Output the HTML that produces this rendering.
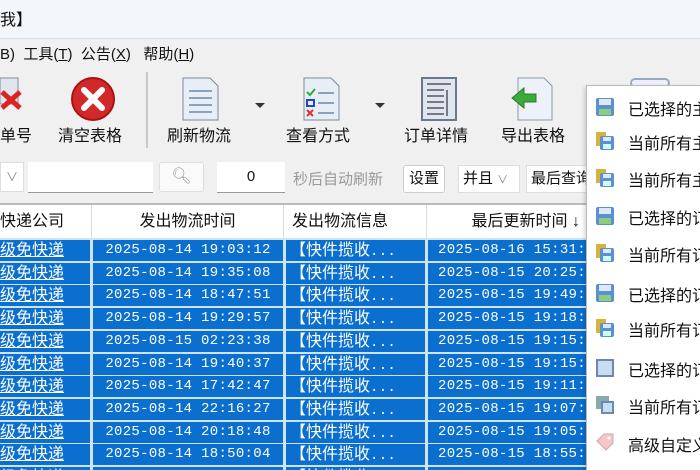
<!DOCTYPE html>
<html style="overflow:hidden;width:700px;height:470px"><head><meta charset="utf-8"><style>
*{margin:0;padding:0;box-sizing:border-box}
body{width:700px;height:470px;overflow:hidden;background:#f0f0f0;font-family:"Liberation Sans","Noto Sans CJK SC",sans-serif;position:relative;color:#111}
.a{position:absolute;white-space:nowrap}
.lbl{font-size:16px;color:#111}
.cell{position:absolute;height:21px;background:#0b6fd0;color:#fff;font-size:16px;line-height:21px;overflow:hidden;white-space:nowrap}
.mono{font-family:"Liberation Mono","Noto Sans CJK SC",monospace;font-size:14px;letter-spacing:.3px}
.hd{position:absolute;top:205px;height:33px;background:#fff;font-size:16px;line-height:33px;text-align:center;border-right:1px solid #ddd;white-space:nowrap}
.mi{position:absolute;left:628px;font-size:16px;color:#111;white-space:nowrap}
.ic{position:absolute;left:595px;width:20px;height:20px}
#clip{position:absolute;left:0;top:0;width:700px;height:470px;overflow:hidden}
</style></head><body><div id="clip">
<div class="a" style="left:0;top:0;width:700px;height:38px;background:#f3f6fb"></div>
<div class="a" style="left:0;top:6px;font-size:16px">我】</div>
<div class="a" style="left:0;top:38px;width:700px;height:1px;background:#dde"></div>
<div class="a" style="left:0;top:43px;font-size:15px">B)&nbsp; 工具(<u>T</u>)&nbsp; 公告(<u>X</u>)&nbsp;&nbsp; 帮助(<u>H</u>)</div>
<svg class="a" style="left:0;top:74px" width="30" height="50"><rect x="0" y="4" width="18" height="26" fill="#dfe6ee" stroke="#889"/><path d="M2 18 L20 34 M20 18 L2 34" stroke="#d22" stroke-width="5"/></svg>
<svg class="a" style="left:70px;top:76px" width="48" height="46"><circle cx="23" cy="23" r="21" fill="#d3282a" stroke="#a11" stroke-width="2"/><path d="M14 14 L32 32 M32 14 L14 32" stroke="#fff" stroke-width="6" stroke-linecap="round"/></svg>
<div class="a" style="left:146px;top:72px;width:2px;height:76px;background:#c8c8c8"></div>
<svg class="a" style="left:180px;top:76px" width="42" height="46"><path d="M3 2 H30 L38 10 V44 H3 Z" fill="#e8eef6" stroke="#7a8a9a"/><path d="M9 15 H32 M9 22 H32 M9 29 H32 M9 36 H32" stroke="#6a8aaa" stroke-width="1.5"/></svg>
<div class="a" style="left:255px;top:103px;width:0;height:0;border-left:5px solid transparent;border-right:5px solid transparent;border-top:5px solid #333"></div>
<svg class="a" style="left:301px;top:76px" width="42" height="46"><path d="M3 2 H30 L38 10 V44 H3 Z" fill="#e8eef6" stroke="#7a8a9a"/><path d="M6 16 L9 19 L14 13" stroke="#3a3" stroke-width="2" fill="none"/><rect x="6" y="24" width="7" height="6" fill="none" stroke="#24c" stroke-width="2"/><path d="M6 34 L12 40 M12 34 L6 40" stroke="#d33" stroke-width="2"/><path d="M17 17 H33 M17 27 H33 M17 37 H33" stroke="#6a8aaa" stroke-width="1.5"/></svg>
<div class="a" style="left:375px;top:103px;width:0;height:0;border-left:5px solid transparent;border-right:5px solid transparent;border-top:5px solid #333"></div>
<svg class="a" style="left:420px;top:76px" width="40" height="46"><rect x="2" y="2" width="34" height="42" fill="#dfe6ee" stroke="#6a7a8a" stroke-width="2"/><path d="M7 8 H31 M7 14 H24 M7 20 H24 M7 26 H24 M7 32 H24 M7 38 H24 M27 14 V40" stroke="#556" stroke-width="1.5"/></svg>
<svg class="a" style="left:510px;top:76px" width="46" height="46"><path d="M8 2 H34 L42 10 V44 H8 Z" fill="#eef2f8" stroke="#8a9aaa"/><path d="M2 22 L14 12 V18 H26 V26 H14 V32 Z" fill="#3aaa3a" stroke="#2a7a2a"/></svg>
<div class="a lbl" style="left:0;top:122px">单号</div>
<div class="a lbl" style="left:58px;top:122px">清空表格</div>
<div class="a lbl" style="left:167px;top:122px">刷新物流</div>
<div class="a lbl" style="left:286px;top:122px">查看方式</div>
<div class="a lbl" style="left:404px;top:122px">订单详情</div>
<div class="a lbl" style="left:501px;top:122px">导出表格</div>
<div class="a" style="left:0;top:162px;width:24px;height:30px;background:#fff;border:1px solid #ddd;color:#888;font-size:12px;line-height:28px;text-align:center">∨</div>
<div class="a" style="left:28px;top:162px;width:125px;height:31px;background:#fff;border-bottom:1px solid #999"></div>
<div class="a" style="left:159px;top:162px;width:45px;height:30px;background:#fafafa;border:1px solid #ddd;border-radius:3px;text-align:center;line-height:28px;color:#999">&#x1F50D;&#xFE0E;</div>
<div class="a" style="left:217px;top:162px;width:68px;height:31px;background:#fff;border-bottom:1px solid #999;text-align:center;line-height:30px;font-size:15px">0</div>
<div class="a" style="left:293px;top:168px;font-size:15px;color:#999">秒后自动刷新</div>
<div class="a" style="left:403px;top:165px;width:42px;height:28px;background:#fff;border:1px solid #ccc;border-radius:3px;font-size:15px;text-align:center;line-height:26px">设置</div>
<div class="a" style="left:458px;top:165px;width:62px;height:28px;background:#fff;border:1px solid #ddd;font-size:15px;line-height:26px;padding-left:4px">并且 <span style="font-size:11px;color:#888">∨</span></div>
<div class="a" style="left:526px;top:165px;width:62px;height:28px;background:#fff;border:1px solid #ddd;font-size:15px;line-height:26px;padding-left:4px;overflow:hidden">最后查询</div>
<div class="a" style="left:0;top:203px;width:700px;height:2px;background:#bbb"></div>
<div class="hd" style="left:0;width:92px;text-align:left">快递公司</div>
<div class="hd" style="left:92px;width:192px">发出物流时间</div>
<div class="hd" style="left:284px;width:143px;text-align:left;padding-left:8px">发出物流信息</div>
<div class="hd" style="left:427px;width:160px;text-align:right;padding-right:6px">最后更新时间 ↓</div>
<div class="a" style="left:0;top:238px;width:586px;height:232px;background:#cfe3f7"></div>
<div id="rows"></div>
<div class="a" style="left:630px;top:78px;width:40px;height:10px;border:2px solid #9ab;border-radius:6px;background:#eef"></div>
<div class="a" style="left:586px;top:85px;width:114px;height:385px;background:#fff;border-left:1px solid #bbb;border-top:1px solid #bbb;box-shadow:-2px 2px 4px rgba(0,0,0,.15)"></div>
<div id="menu"></div>
</div>
<script>
var d1=["19:03:12","19:35:08","18:47:51","19:29:57","02:23:38","19:40:37","17:42:47","22:16:27","20:18:48","18:50:04"];
var dd=["14","14","14","14","15","14","14","14","14","14"];
var u=["2025-08-16 15:31:","2025-08-15 20:25:","2025-08-15 19:49:","2025-08-15 19:18:","2025-08-15 19:15:","2025-08-15 19:15:","2025-08-15 19:11:","2025-08-15 19:07:","2025-08-15 19:05:","2025-08-15 18:55:"];
var h="";
for(var i=0;i<11;i++){var t=(240+i*22.7).toFixed(1);var k=i%10;
h+='<div class="cell" style="left:0;top:'+t+'px;width:90px"><u>级免快递</u></div>';
h+='<div class="cell mono" style="left:93px;top:'+t+'px;width:190px;text-align:center">2025-08-'+dd[k]+' '+d1[k]+'</div>';
h+='<div class="cell" style="left:286px;top:'+t+'px;width:139px;padding-left:4px">【快件揽收<span class="mono">...</span></div>';
h+='<div class="cell mono" style="left:428px;top:'+t+'px;width:158px;padding-left:10px">'+u[k]+'</div>';}
document.getElementById("rows").innerHTML=h;
var m=[["已选择的主",107,"s"],["当前所有主",141,"m"],["当前所有主",178,"m"],["已选择的订",216,"s"],["当前所有订",253,"m"],["已选择的订",293,"s"],["当前所有订",328,"m"],["已选择的订",368,"w"],["当前所有订",405,"ww"],["高级自定义",443,"t"]];
var g="";
m.forEach(function(x){var y=x[1];var ic;
if(x[2]=="s")ic='<svg class="ic" style="top:'+(y-10)+'px"><rect x="1" y="1" width="18" height="18" rx="2" fill="#5b8fd6"/><rect x="4" y="2" width="12" height="6" fill="#dfe8f5"/><rect x="4" y="12" width="12" height="6" fill="#8ccf7a"/></svg>';
else if(x[2]=="m")ic='<svg class="ic" style="top:'+(y-10)+'px"><rect x="1" y="1" width="10" height="14" fill="#d6b33a"/><rect x="5" y="5" width="14" height="14" rx="2" fill="#5b8fd6"/><rect x="8" y="6" width="8" height="4" fill="#dfe8f5"/><rect x="8" y="13" width="8" height="5" fill="#cfe"/></svg>';
else if(x[2]=="w")ic='<svg class="ic" style="top:'+(y-10)+'px"><rect x="1" y="1" width="18" height="18" fill="#6a8ab0"/><rect x="3" y="3" width="14" height="14" fill="#c8dcf2"/></svg>';
else if(x[2]=="ww")ic='<svg class="ic" style="top:'+(y-10)+'px"><rect x="1" y="1" width="13" height="13" fill="#8aa" /><rect x="6" y="6" width="13" height="13" fill="#6a8ab0"/><rect x="8" y="8" width="9" height="9" fill="#c8dcf2"/></svg>';
else ic='<svg class="ic" style="top:'+(y-10)+'px"><path d="M2 8 L9 1 H18 V10 L11 17 Z" fill="#f4c7c7" stroke="#caa"/><circle cx="14" cy="5" r="1.5" fill="#fff"/></svg>';
g+=ic+'<div class="mi" style="top:'+(y-11)+'px">'+x[0]+'</div>';});
document.getElementById("menu").innerHTML=g;
</script>
</body></html>
